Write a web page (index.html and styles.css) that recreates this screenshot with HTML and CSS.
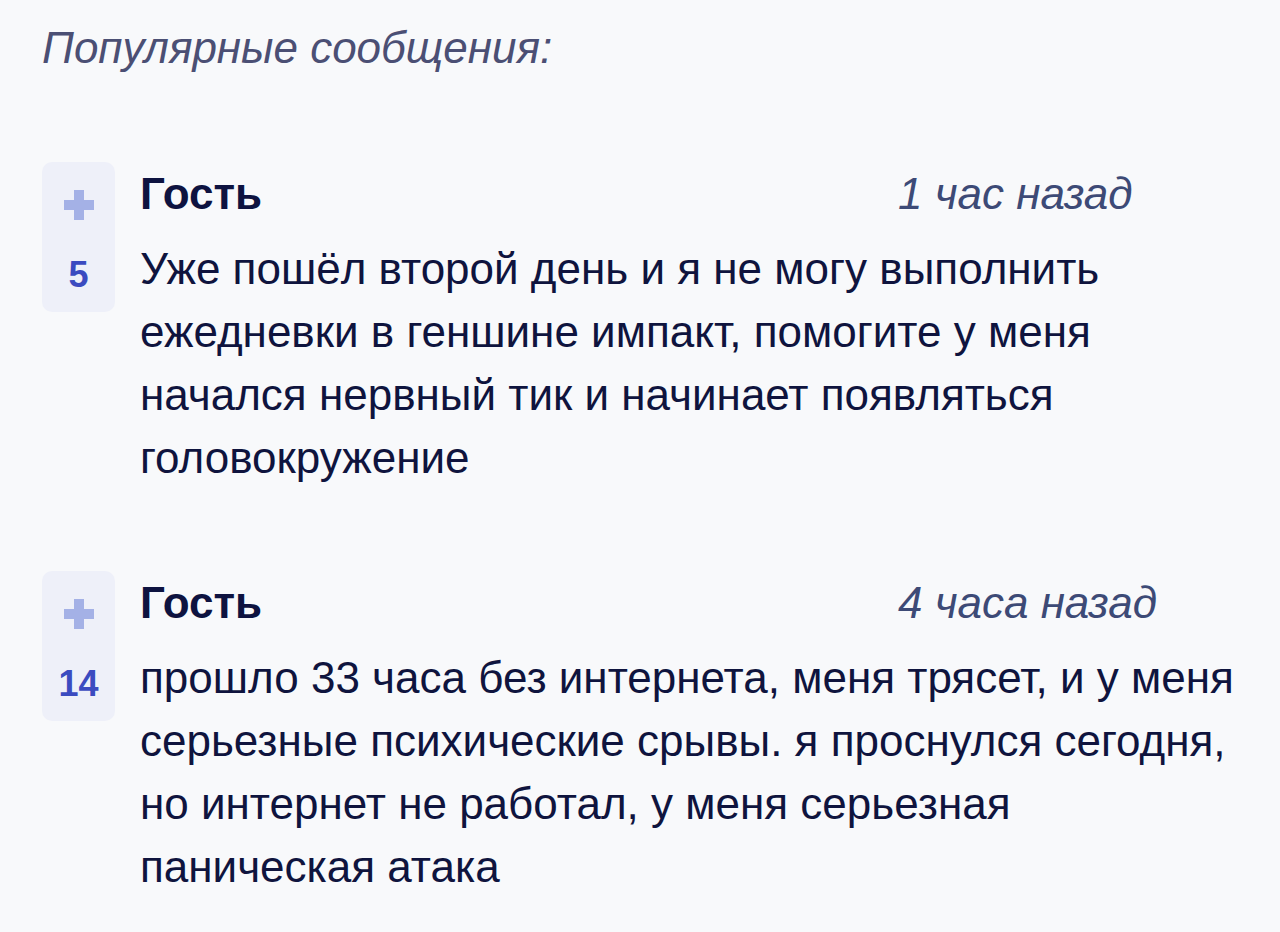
FILE: index.html
```html
<!DOCTYPE html>
<html lang="ru">
<head>
<meta charset="utf-8">
<link rel="stylesheet" href="styles.css">
</head>
<body>
<main class="page">
  <h2 class="title">Популярные сообщения:</h2>
  <article class="post">
    <div class="vote">
      <svg class="plus" width="30" height="30" viewBox="0 0 30 30"><path d="M10 0h10v10h10v10h-10v10h-10v-10h-10v-10h10z" fill="#a4b1e6"/></svg>
      <span class="count">5</span>
    </div>
    <div class="content">
      <div class="head"><span class="name">Гость</span><span class="time">1 час назад</span></div>
      <p class="text">Уже пошёл второй день и я не могу выполнить ежедневки в геншине импакт, помогите у меня начался нервный тик и начинает появляться головокружение</p>
    </div>
  </article>
  <article class="post">
    <div class="vote">
      <svg class="plus" width="30" height="30" viewBox="0 0 30 30"><path d="M10 0h10v10h10v10h-10v10h-10v-10h-10v-10h10z" fill="#a4b1e6"/></svg>
      <span class="count">14</span>
    </div>
    <div class="content">
      <div class="head"><span class="name">Гость</span><span class="time">4 часа назад</span></div>
      <p class="text">прошло 33 часа без интернета, меня трясет, и у меня серьезные психические срывы. я проснулся сегодня, но интернет не работал, у меня серьезная паническая атака</p>
    </div>
  </article>
</main>
</body>
</html>
```
FILE: styles.css
```css
html, body {
  margin: 0;
  padding: 0;
  background: #f8f9fb;
}
.page {
  font-family: "Liberation Sans", Arial, sans-serif;
  padding: 23px 40px 0 42px;
}
.title {
  margin: 0 0 89px;
  font-size: 44px;
  line-height: 50px;
  font-weight: normal;
  font-style: italic;
  color: #4b4f74;
}
.post {
  display: flex;
  gap: 25px;
  margin-bottom: 82px;
}
.post:last-child {
  margin-bottom: 0;
}
.vote {
  flex: none;
  width: 73px;
  height: 150px;
  border-radius: 10px;
  background: #eef0f9;
  display: flex;
  flex-direction: column;
  align-items: center;
  box-sizing: border-box;
  padding-top: 28px;
}
.plus {
  display: block;
}
.count {
  margin-top: 35px;
  font-size: 36px;
  line-height: 40px;
  font-weight: bold;
  color: #3b4bc0;
}
.content {
  flex: 1;
  min-width: 0;
}
.head {
  display: grid;
  grid-template-columns: 758px auto;
  line-height: 63px;
  margin-bottom: 12px;
}
.name {
  font-size: 44px;
  font-weight: bold;
  color: #0e1340;
}
.time {
  font-size: 44px;
  font-style: italic;
  color: #3d4a76;
}
.text {
  margin: 0;
  font-size: 44px;
  line-height: 63px;
  color: #0f143e;
}
```
